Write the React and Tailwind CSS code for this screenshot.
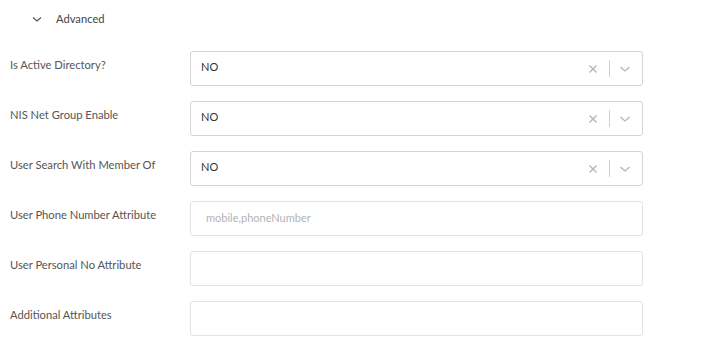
import React from "react";

const font = { fontFamily: "Lato, 'Noto Sans', sans-serif" };

function SelectBox({ value }) {
  return (
    <div className="flex h-[35px] w-[453px] items-center rounded-[3px] border border-[#d4d4d4] bg-white">
      <div className="flex-1 pb-[2px] pl-[10px] text-[11px] text-[#333]">{value}</div>
      <div className="flex h-full items-center">
        <svg width="10" height="10" viewBox="0 0 10 10" className="mr-[11px]">
          <path d="M1.5 1.5 L8.5 8.5 M8.5 1.5 L1.5 8.5" stroke="#b5b5b5" strokeWidth="1.4" fill="none" />
        </svg>
        <div className="h-[17px] w-px bg-[#d0d0d0]" />
        <svg width="12" height="8" viewBox="0 0 12 8" className="ml-[9px] mr-[11px]">
          <path d="M1.5 2 L6 6 L10.5 2" stroke="#b5b5b5" strokeWidth="1.3" fill="none" />
        </svg>
      </div>
    </div>
  );
}

function InputBox({ placeholder }) {
  return (
    <div className="flex h-[35px] w-[453px] items-center rounded-[3px] border border-[#e3e3e3] bg-white">
      <div className="pb-[1px] pl-[15px] text-[11px] text-[#b3b3b3]">{placeholder}</div>
    </div>
  );
}

function Row({ label, children }) {
  return (
    <div className="flex items-start">
      <div className="w-[180px] pt-[6px] text-[11.2px] leading-[16px] text-[#555]">{label}</div>
      {children}
    </div>
  );
}

export default function App() {
  return (
    <div className="min-h-[354px] w-[709px] bg-white pl-[10px] pt-[9px]" style={font}>
      <div className="flex h-[20px] items-center pl-[22px]">
        <svg width="10" height="7" viewBox="0 0 10 7">
          <path d="M1 1.5 L5 5 L9 1.5" stroke="#555" strokeWidth="1.2" fill="none" />
        </svg>
        <span className="ml-[14px] text-[11.2px] text-[#444]">Advanced</span>
      </div>
      <div className="mt-[22px] flex flex-col gap-[15px]">
        <Row label="Is Active Directory?">
          <SelectBox value="NO" />
        </Row>
        <Row label="NIS Net Group Enable">
          <SelectBox value="NO" />
        </Row>
        <Row label="User Search With Member Of">
          <SelectBox value="NO" />
        </Row>
        <Row label="User Phone Number Attribute">
          <InputBox placeholder="mobile,phoneNumber" />
        </Row>
        <Row label="User Personal No Attribute">
          <InputBox />
        </Row>
        <Row label="Additional Attributes">
          <InputBox />
        </Row>
      </div>
    </div>
  );
}
